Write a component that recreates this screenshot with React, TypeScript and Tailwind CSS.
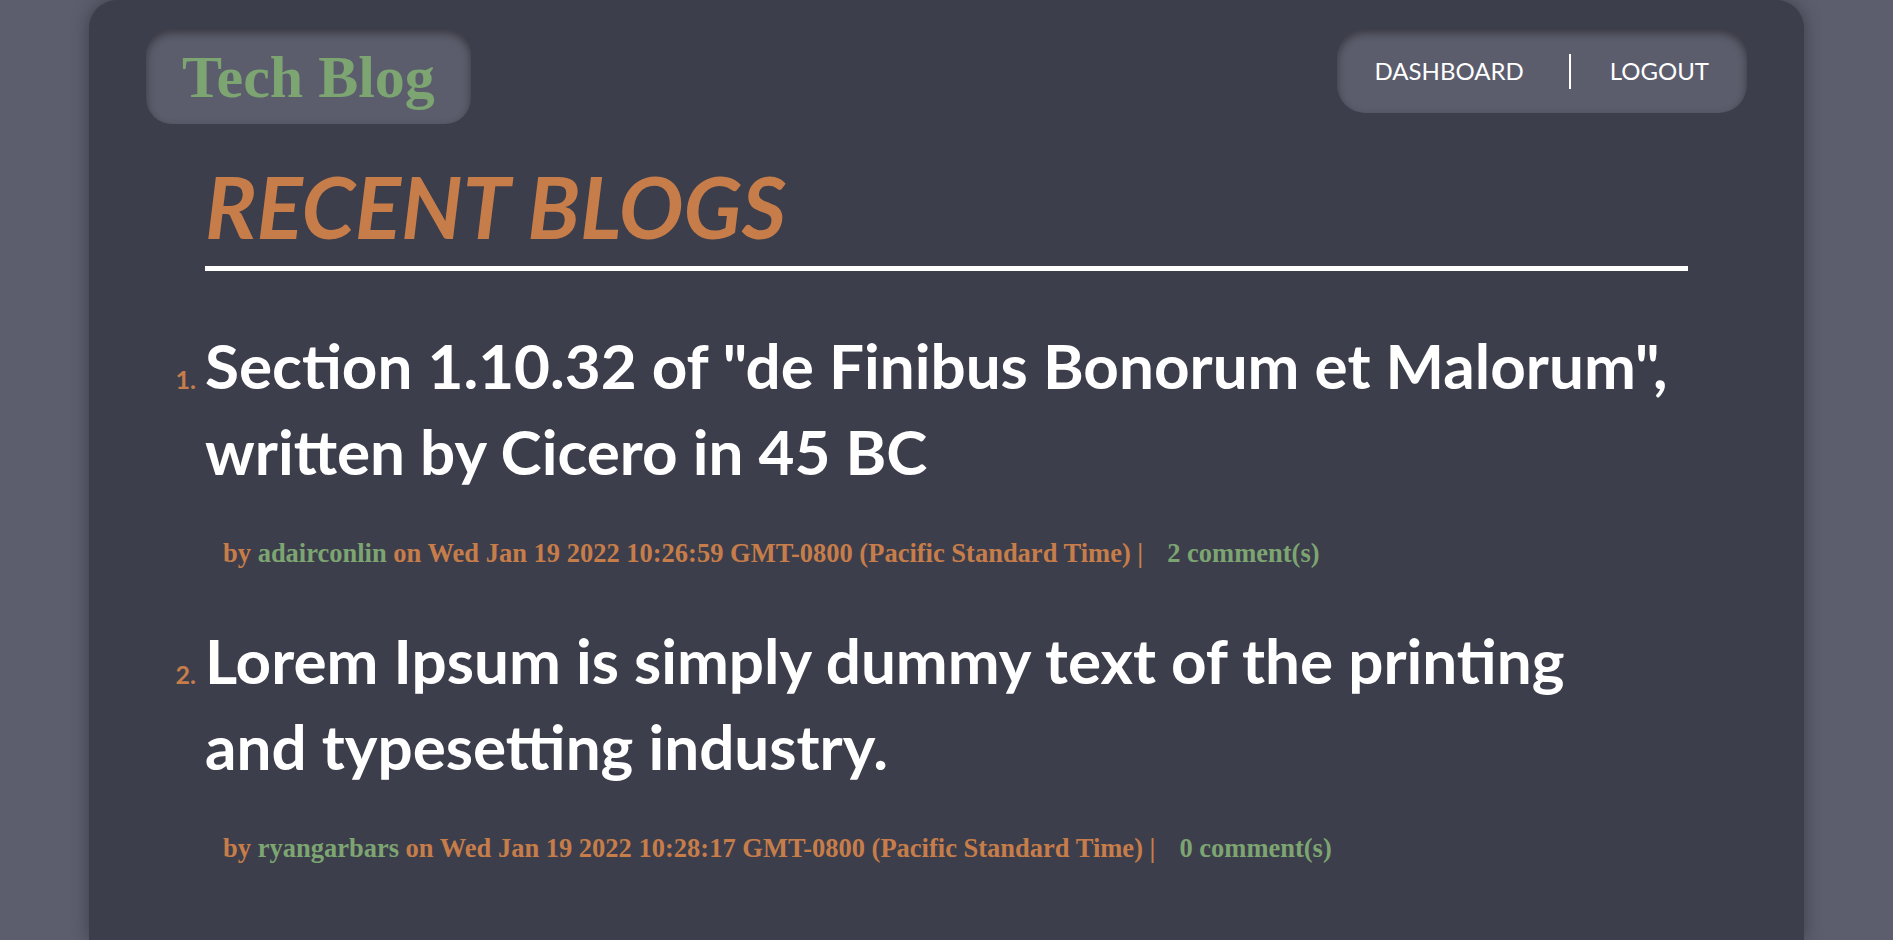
import React from "react";

const posts = [
  {
    title: 'Section 1.10.32 of "de Finibus Bonorum et Malorum", written by Cicero in 45 BC',
    user: "adairconlin",
    date: "Wed Jan 19 2022 10:26:59 GMT-0800 (Pacific Standard Time)",
    comments: 2,
  },
  {
    title: "Lorem Ipsum is simply dummy text of the printing and typesetting industry.",
    user: "ryangarbars",
    date: "Wed Jan 19 2022 10:28:17 GMT-0800 (Pacific Standard Time)",
    comments: 0,
  },
];

export default function App() {
  return (
    <div className="min-h-screen w-full bg-[#5c5e6e] overflow-hidden">
      <div className="mx-auto w-[1715px] min-h-[940px] rounded-t-[28px] bg-[#3d3e4b] shadow-[0_0_18px_rgba(0,0,0,0.35)]">
        <header className="flex items-start justify-between px-[57px] pt-[29px]">
          <div className="flex h-[95px] items-center rounded-[26px] bg-[#5c5d6c] px-[36px] shadow-[inset_0_4px_9px_rgba(0,0,0,0.4)]">
            <span className="text-[60px] font-bold leading-none text-[#7ca572] [font-family:'Liberation_Serif',serif]">
              Tech Blog
            </span>
          </div>
          <nav className="flex h-[84px] items-center rounded-[28px] bg-[#5c5d6c] px-[38px] shadow-[inset_0_4px_9px_rgba(0,0,0,0.4)] [font-family:Lato,sans-serif]">
            <span className="text-[24px] leading-none text-white">DASHBOARD</span>
            <div className="ml-[45px] mr-[39px] h-[35px] w-[2px] bg-white" />
            <span className="text-[24px] leading-none text-white">LOGOUT</span>
          </nav>
        </header>
        <main className="px-[116px]">
          <h1 className="mt-[39px] border-b-[5px] border-white pb-[17px] text-[86px] font-bold italic leading-[86px] text-[#c67d4a] [font-family:Lato,sans-serif]">
            RECENT BLOGS
          </h1>
          <ol className="mt-[51px] flex flex-col gap-[49px]">
            {posts.map((p, i) => (
              <li key={i}>
                <div className="flex items-baseline">
                  <span className="-ml-[34px] w-[34px] shrink-0 pr-[9px] text-right text-[25px] font-bold text-[#c67d4a] [font-family:Lato,sans-serif]">
                    {i + 1}.
                  </span>
                  <h2 className="max-w-[1466px] text-[62px] font-bold leading-[86px] text-white [font-family:Lato,sans-serif]">
                    {p.title}
                  </h2>
                </div>
                <p className="ml-[18px] mt-[44px] text-[26.5px] font-bold leading-[30px] text-[#c67d4a] [font-family:'Liberation_Serif',serif]">
                  by <span className="text-[#7ca572]">{p.user}</span> on {p.date} |
                  <span className="ml-[24px] text-[#7ca572]">{p.comments} comment(s)</span>
                </p>
              </li>
            ))}
          </ol>
        </main>
      </div>
    </div>
  );
}
